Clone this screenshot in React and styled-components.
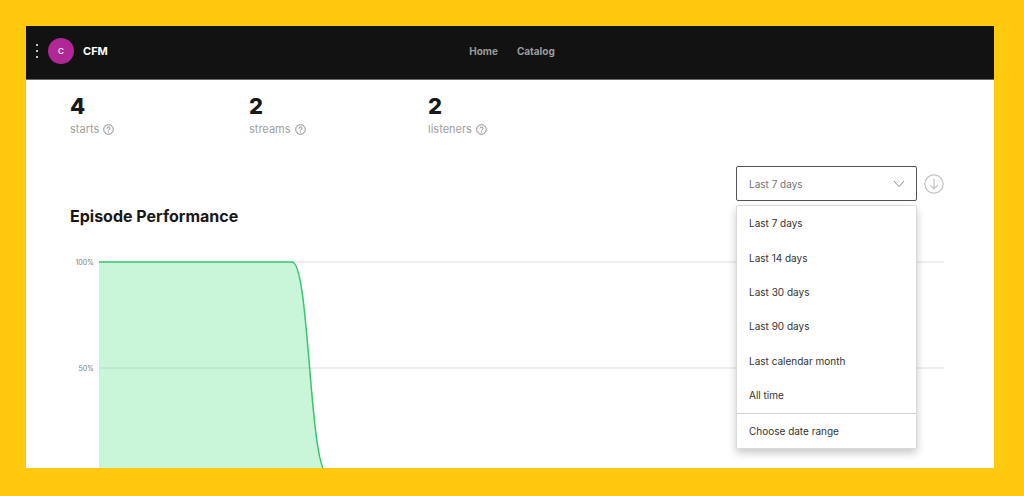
import { useState } from "react";
import styled, { createGlobalStyle } from "styled-components";

const stats = [
    { value: 4, label: "starts" },
    { value: 2, label: "streams" },
    { value: 2, label: "listeners" },
];

const ranges = [
    "Last 7 days",
    "Last 14 days",
    "Last 30 days",
    "Last 90 days",
    "Last calendar month",
    "All time",
    "Choose date range",
];

const HelpIcon = () => (
    <svg width="11" height="11" viewBox="0 0 11 11" fill="none" stroke="#8c8c8c">
        <circle cx="5.5" cy="5.5" r="4.8" />
        <path d="M4 4.5a1.5 1.5 0 1 1 2.3 1.2c-.6.4-.8.6-.8 1.1" />
        <path d="M5.5 7.6v1" />
    </svg>
);

const DownloadIcon = () => (
    <svg width="20" height="20" viewBox="0 0 20 20" fill="none" stroke="#c4c4c4">
        <circle cx="10" cy="10" r="9.2" strokeWidth="1.2" />
        <path d="M10 4.8v10M6.2 11.2l3.8 3.8 3.8-3.8" strokeWidth="1.2" />
    </svg>
);

const Chevron = () => (
    <svg width="12" height="8" viewBox="0 0 12 8" fill="none" stroke="#8a8a8a">
        <path d="M1 1l5 5.6L11 1" />
    </svg>
);

const DateRange = () => {
    const [range, setRange] = useState(ranges[0]);
    const [open, setOpen] = useState(true);

    const pick = (item) => {
        setRange(item);
        setOpen(false);
    };

    return (
        <Dropdown>
            <Field onClick={() => setOpen(!open)}>
                <Select
                    aria-label="Date range"
                    value={range}
                    onChange={(e) => setRange(e.target.value)}
                    onMouseDown={(e) => e.preventDefault()}
                >
                    {ranges.map((item) => (
                        <option key={item}>{item}</option>
                    ))}
                </Select>
                <Chevron />
            </Field>
            {open && (
                <Menu>
                    {ranges.map((item, i) => (
                        <MenuItem key={item} $divided={i === ranges.length - 1}>
                            <MenuButton onClick={() => pick(item)}>{item}</MenuButton>
                        </MenuItem>
                    ))}
                </Menu>
            )}
        </Dropdown>
    );
};

const Chart = () => (
    <ChartArea>
        <Scale>
            <Tick>100%</Tick>
            <Tick>50%</Tick>
        </Scale>
        <Plot role="img" aria-label="Share of listeners over the episode">
            <GridLine x1="0" x2="100%" y1="8" y2="8" />
            <GridLine x1="0" x2="100%" y1="114" y2="114" />
            <path d="M0 8H193C211 8 210 220 229 220H0Z" fill="#1ed760" fillOpacity="0.24" />
            <path d="M0 8H193C211 8 210 220 229 220" fill="none" stroke="#34c76c" strokeWidth="1.5" />
        </Plot>
    </ChartArea>
);

const App = () => {
    return (
        <>
            <GlobalStyle />
            <Frame>
                <Header>
                    <Show>
                        <MoreButton aria-label="More">
                            <Dot />
                            <Dot />
                            <Dot />
                        </MoreButton>
                        <Avatar>C</Avatar>
                        <ShowName>CFM</ShowName>
                    </Show>
                    <Nav>
                        <NavLink href="#home">Home</NavLink>
                        <NavLink href="#catalog">Catalog</NavLink>
                    </Nav>
                </Header>
                <Main>
                    <Stats>
                        {stats.map((stat) => (
                            <div key={stat.label}>
                                <Value>{stat.value}</Value>
                                <Label>
                                    {stat.label}
                                    <HelpIcon />
                                </Label>
                            </div>
                        ))}
                    </Stats>
                    <Toolbar>
                        <DateRange />
                        <IconButton aria-label="Download">
                            <DownloadIcon />
                        </IconButton>
                    </Toolbar>
                    <Title>Episode Performance</Title>
                    <Chart />
                </Main>
            </Frame>
        </>
    );
};

export default App;

const GlobalStyle = createGlobalStyle`
* {
    box-sizing: border-box;
}

body {
    margin: 0;
    background: #ffc90e;
    color: #181818;
    font-family: Inter, "Liberation Sans", sans-serif;
}

button, select {
    font-family: inherit;
}

svg {
    flex: none;
}
`;

const Frame = styled.div`
display: flex;
flex-direction: column;
height: 100vh;
padding: 26px 30px 28px 26px;
`;

const Header = styled.header`
display: grid;
grid-template-columns: 1fr auto 1fr;
align-items: center;
flex: none;
padding: 12px 2px 15px 6px;
background: #121212;
border-bottom: 1px solid #6a6a6a;
`;

const Show = styled.div`
display: flex;
align-items: center;
`;

const MoreButton = styled.button`
display: flex;
flex-direction: column;
align-items: center;
gap: 4px;
width: 10px;
padding: 0;
border: 0;
background: none;
cursor: pointer;
`;

const Dot = styled.span`
width: 2px;
height: 2px;
border-radius: 1px;
background: #fff;
`;

const Avatar = styled.div`
display: flex;
align-items: center;
justify-content: center;
width: 26px;
height: 26px;
margin: 0 9px 0 6px;
border-radius: 50%;
background: #af2896;
color: #fff;
font-size: 8px;
font-weight: 500;
`;

const ShowName = styled.div`
color: #fff;
font-size: 11px;
font-weight: 700;
`;

const Nav = styled.nav`
display: flex;
gap: 19px;
`;

const NavLink = styled.a`
color: #9b9b9b;
font-size: 10px;
font-weight: 700;
text-decoration: none;
`;

const Main = styled.main`
flex: 1;
min-height: 0;
overflow: hidden;
padding: 13px 50px 0 44px;
background: #fff;
`;

const Stats = styled.div`
display: grid;
grid-template-columns: repeat(3, 179px);
`;

const Value = styled.div`
font-size: 22px;
font-weight: 800;
line-height: 26px;
`;

const Label = styled.div`
display: flex;
align-items: center;
gap: 4px;
color: #a0a0a0;
font-size: 11px;
line-height: 20px;
`;

const Toolbar = styled.div`
display: flex;
align-items: center;
justify-content: flex-end;
gap: 7px;
margin-top: 27px;
`;

const Dropdown = styled.div`
position: relative;
width: 181px;
`;

const Field = styled.div`
display: flex;
align-items: center;
height: 35px;
padding: 0 11px 0 12px;
border: 1px solid #535353;
border-radius: 2px;
background: #fff;
`;

const Select = styled.select`
flex: 1;
padding: 0;
border: 0;
outline: 0;
appearance: none;
background: none;
color: #757575;
font-size: 10px;
`;

const Menu = styled.ul`
display: flex;
flex-direction: column;
position: absolute;
top: 39px;
left: 0;
right: 0;
z-index: 1;
height: 244px;
margin: 0;
padding: 0;
border: 1px solid #d9d9d9;
border-radius: 2px;
background: #fff;
box-shadow: 0 4px 8px rgba(0, 0, 0, 0.22);
list-style: none;
`;

const MenuItem = styled.li`
flex: 1;
border-top: ${(props) => (props.$divided ? "1px solid #d0d0d0" : "0")};
`;

const MenuButton = styled.button`
display: block;
width: 100%;
height: 100%;
padding: 0 12px;
border: 0;
background: none;
color: #333;
font-size: 10px;
text-align: left;
cursor: pointer;
`;

const IconButton = styled.button`
display: flex;
padding: 0;
border: 0;
background: none;
cursor: pointer;
`;

const Title = styled.h2`
margin: 4px 0 27px;
font-size: 16px;
font-weight: 700;
line-height: 22px;
`;

const ChartArea = styled.div`
display: flex;
gap: 5px;
`;

const Scale = styled.div`
display: flex;
flex-direction: column;
gap: 88px;
width: 24px;
`;

const Tick = styled.div`
color: #7a7a7a;
font-size: 7px;
line-height: 18px;
text-align: right;
`;

const Plot = styled.svg`
flex: 1;
height: 222px;
`;

const GridLine = styled.line`
stroke: #dedede;
stroke-width: 1;
`;
